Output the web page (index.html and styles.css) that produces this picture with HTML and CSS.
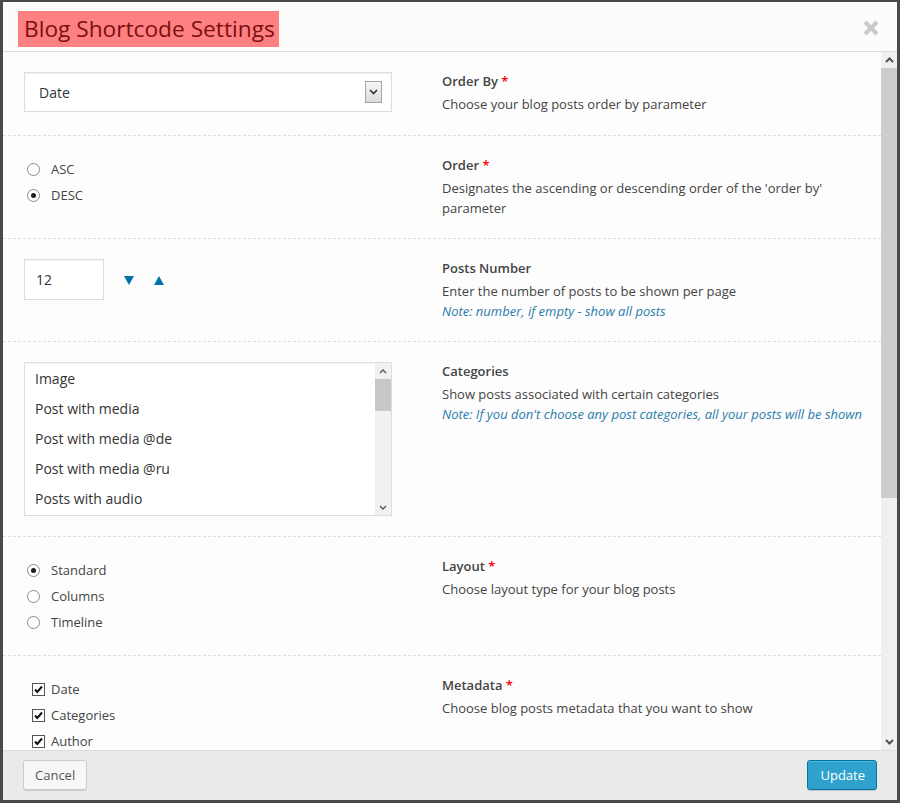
FILE: index.html
```html
<!DOCTYPE html>
<html lang="en">
<head>
<meta charset="utf-8">
<title>Blog Shortcode Settings</title>
<link rel="stylesheet" href="styles.css">
</head>
<body>
<div class="modal">
  <header class="modal-head">
    <h1 class="title">Blog Shortcode Settings</h1>
    <button class="close" aria-label="Close">
      <svg width="16" height="16" viewBox="0 0 16 16"><path d="M2 2 L14 14 M14 2 L2 14" stroke="#c9c9c9" stroke-width="4" fill="none"/></svg>
    </button>
  </header>

  <div class="modal-body">
    <div class="rows">
      <div class="row">
        <div class="field">
          <div class="select">
            <span class="select-value">Date</span>
            <span class="select-btn"><svg width="9" height="6" viewBox="0 0 9 6"><path d="M1 1 L4.5 4.5 L8 1" stroke="#333" stroke-width="1.6" fill="none"/></svg></span>
          </div>
        </div>
        <div class="info">
          <div class="label">Order By <span class="req">*</span></div>
          <p class="desc">Choose your blog posts order by parameter</p>
        </div>
      </div>

      <div class="row">
        <div class="field">
          <div class="opt"><span class="radio"></span>ASC</div>
          <div class="opt"><span class="radio on"></span>DESC</div>
        </div>
        <div class="info">
          <div class="label">Order <span class="req">*</span></div>
          <p class="desc">Designates the ascending or descending order of the 'order by' parameter</p>
        </div>
      </div>

      <div class="row">
        <div class="field number-field">
          <div class="num-input">12</div>
          <span class="spin"><svg width="10" height="9" viewBox="0 0 10 9"><path d="M0 0 H10 L5 9 Z" fill="#0073aa"/></svg></span>
          <span class="spin"><svg width="10" height="9" viewBox="0 0 10 9"><path d="M0 9 H10 L5 0 Z" fill="#0073aa"/></svg></span>
        </div>
        <div class="info">
          <div class="label">Posts Number</div>
          <p class="desc">Enter the number of posts to be shown per page</p>
          <p class="note">Note: number, if empty - show all posts</p>
        </div>
      </div>

      <div class="row">
        <div class="field">
          <div class="listbox">
            <ul class="list-items">
              <li>Image</li>
              <li>Post with media</li>
              <li>Post with media @de</li>
              <li>Post with media @ru</li>
              <li>Posts with audio</li>
            </ul>
            <div class="mini-scroll">
              <span class="mini-btn"><svg width="8" height="5" viewBox="0 0 8 5"><path d="M1 4 L4 1 L7 4" stroke="#555" stroke-width="1.4" fill="none"/></svg></span>
              <span class="mini-thumb"></span>
              <span class="mini-track"></span>
              <span class="mini-btn"><svg width="8" height="5" viewBox="0 0 8 5"><path d="M1 1 L4 4 L7 1" stroke="#555" stroke-width="1.4" fill="none"/></svg></span>
            </div>
          </div>
        </div>
        <div class="info">
          <div class="label">Categories</div>
          <p class="desc">Show posts associated with certain categories</p>
          <p class="note">Note: If you don't choose any post categories, all your posts will be shown</p>
        </div>
      </div>

      <div class="row">
        <div class="field">
          <div class="opt"><span class="radio on"></span>Standard</div>
          <div class="opt"><span class="radio"></span>Columns</div>
          <div class="opt"><span class="radio"></span>Timeline</div>
        </div>
        <div class="info">
          <div class="label">Layout <span class="req">*</span></div>
          <p class="desc">Choose layout type for your blog posts</p>
        </div>
      </div>

      <div class="row">
        <div class="field">
          <div class="opt chk-opt"><span class="check"><svg width="11" height="11" viewBox="0 0 11 11"><path d="M2 5.5 L4.3 8 L9 2.5" stroke="#111" stroke-width="2" fill="none"/></svg></span>Date</div>
          <div class="opt chk-opt"><span class="check"><svg width="11" height="11" viewBox="0 0 11 11"><path d="M2 5.5 L4.3 8 L9 2.5" stroke="#111" stroke-width="2" fill="none"/></svg></span>Categories</div>
          <div class="opt chk-opt"><span class="check"><svg width="11" height="11" viewBox="0 0 11 11"><path d="M2 5.5 L4.3 8 L9 2.5" stroke="#111" stroke-width="2" fill="none"/></svg></span>Author</div>
        </div>
        <div class="info">
          <div class="label">Metadata <span class="req">*</span></div>
          <p class="desc">Choose blog posts metadata that you want to show</p>
        </div>
      </div>
    </div>

    <div class="vscroll">
      <span class="vs-btn"><svg width="9" height="6" viewBox="0 0 9 6"><path d="M1 5 L4.5 1.5 L8 5" stroke="#505050" stroke-width="2" fill="none"/></svg></span>
      <span class="vs-thumb"></span>
      <span class="vs-track"></span>
      <span class="vs-btn"><svg width="9" height="6" viewBox="0 0 9 6"><path d="M1 1 L4.5 4.5 L8 1" stroke="#505050" stroke-width="2" fill="none"/></svg></span>
    </div>
  </div>

  <footer class="modal-foot">
    <button class="btn">Cancel</button>
    <button class="btn btn-primary">Update</button>
  </footer>
</div>
</body>
</html>
```

FILE: styles.css
```css
* { box-sizing: border-box; }

html, body {
  margin: 0;
  height: 803px;
}

body {
  background: #4a4a4a;
  padding: 2px 3px 3px 3px;
  font-family: "Open Sans", "Liberation Sans", sans-serif;
  font-size: 13px;
  color: #444;
  overflow: hidden;
}

.modal {
  width: 894px;
  height: 798px;
  background: #fdfdfd;
  display: flex;
  flex-direction: column;
}

.modal-head {
  height: 50px;
  flex: none;
  background: #fcfcfc;
  border-bottom: 1px solid #dcdcdc;
  display: flex;
  align-items: flex-start;
  justify-content: space-between;
  padding: 9px 18px 0 15px;
}

.title {
  margin: 0;
  font-size: 22.7px;
  font-weight: 400;
  line-height: 36px;
  padding: 0 4px 0 6px;
  background: #ff8080;
  color: #7a1010;
}

.close {
  margin-top: 9px;
  border: 0;
  padding: 0;
  background: none;
  width: 16px;
  height: 16px;
  display: flex;
}

.modal-body {
  flex: 1;
  min-height: 0;
  display: flex;
  background: #fdfdfd;
}

.rows {
  flex: 1;
  min-width: 0;
  overflow: hidden;
}

.row {
  display: flex;
  align-items: flex-start;
  gap: 50px;
  padding: 20px 10px 20px 21px;
  border-top: 1px dashed #dedede;
}

.row:first-child {
  border-top: 0;
  padding-bottom: 21px;
}

.field {
  width: 368px;
  flex: none;
}

.info {
  flex: 1;
  min-width: 0;
}

.label {
  font-weight: 600;
  line-height: 18px;
  color: #444;
}

.req {
  color: #f00;
}

.desc,
.note {
  margin: 0;
  line-height: 20px;
}

.desc {
  margin-top: 4px;
}

.note {
  font-style: italic;
  color: #2a7cab;
}

/* select */
.select {
  height: 40px;
  border: 1px solid #dddddd;
  background: #fff;
  box-shadow: inset 0 1px 2px rgba(0,0,0,0.06);
  display: flex;
  align-items: center;
  justify-content: space-between;
  padding: 0 9px 0 14px;
  font-size: 14px;
  color: #333;
}

.select-btn {
  width: 17px;
  height: 22px;
  border: 1px solid #a4a4a4;
  background: linear-gradient(#f6f6f6, #dcdcdc);
  display: flex;
  align-items: center;
  justify-content: center;
}

/* radios & checkboxes */
.opt {
  height: 26px;
  display: flex;
  align-items: center;
  padding-left: 3px;
  color: #444;
}

.radio {
  width: 13px;
  height: 13px;
  border: 1px solid #8a8a8a;
  border-radius: 50%;
  background: #fff;
  margin-right: 11px;
  display: flex;
  align-items: center;
  justify-content: center;
}

.radio.on::after {
  content: "";
  width: 5px;
  height: 5px;
  border-radius: 50%;
  background: #1e1e1e;
}

.chk-opt {
  padding-left: 8px;
}

.check {
  width: 13px;
  height: 13px;
  border: 1px solid #555;
  background: #fff;
  margin-right: 6px;
  display: flex;
  align-items: center;
  justify-content: center;
}

.check svg {
  display: block;
}

/* number */
.number-field {
  display: flex;
  align-items: center;
}

.num-input {
  width: 80px;
  height: 41px;
  border: 1px solid #dddddd;
  background: #fff;
  box-shadow: inset 0 1px 2px rgba(0,0,0,0.06);
  padding-left: 11px;
  line-height: 39px;
  font-size: 14px;
  color: #333;
}

.spin {
  display: flex;
  margin-left: 20px;
  margin-top: 2px;
}

.spin + .spin {
  margin-left: 20px;
}

/* listbox */
.listbox {
  height: 154px;
  border: 1px solid #dddddd;
  background: #fff;
  display: flex;
  box-shadow: inset 0 1px 2px rgba(0,0,0,0.04);
}

.list-items {
  list-style: none;
  margin: 0;
  padding: 1px 0 0 10px;
  flex: 1;
  overflow: hidden;
  font-size: 14px;
  color: #333;
}

.list-items li {
  line-height: 30px;
}

.mini-scroll {
  width: 16px;
  flex: none;
  background: #f1f1f1;
  display: flex;
  flex-direction: column;
}

.mini-btn {
  height: 16px;
  flex: none;
  display: flex;
  align-items: center;
  justify-content: center;
}

.mini-thumb {
  height: 32px;
  flex: none;
  background: #c8c8c8;
}

.mini-track {
  flex: 1;
}

/* main scrollbar */
.vscroll {
  width: 16px;
  flex: none;
  background: #f0f0f0;
  display: flex;
  flex-direction: column;
}

.vs-btn {
  height: 16px;
  flex: none;
  display: flex;
  align-items: center;
  justify-content: center;
}

.vs-thumb {
  height: 430px;
  flex: none;
  background: #cdcdcd;
}

.vs-track {
  flex: 1;
}

/* footer */
.modal-foot {
  height: 50px;
  flex: none;
  background: #eaeaea;
  border-top: 1px solid #dcdcdc;
  display: flex;
  align-items: flex-start;
  justify-content: space-between;
  padding: 9px 20px 0 20px;
}

.btn {
  height: 30px;
  padding: 0 11px;
  border: 1px solid #cccccc;
  border-radius: 3px;
  background: #f7f7f7;
  box-shadow: 0 1px 0 #cccccc;
  font-family: "Open Sans", "Liberation Sans", sans-serif;
  font-size: 13px;
  line-height: 28px;
  white-space: nowrap;
  color: #555;
}

.btn-primary {
  background: #2ea2cc;
  border-color: #0074a2;
  color: #fff;
  padding: 0 11px 0 12px;
  box-shadow: inset 0 1px 0 rgba(120,200,230,0.5), 0 1px 0 rgba(0,0,0,0.15);
}
```
